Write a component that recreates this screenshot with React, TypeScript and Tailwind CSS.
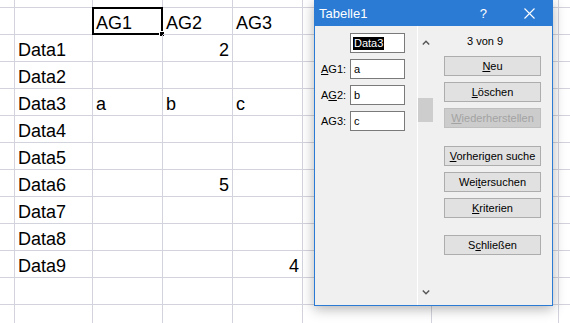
const colWidths = ["w-[15px]", "w-[78px]", "w-[70px]", "w-[70px]", "w-[70px]", "w-[129px]", "w-[127px]", "w-[40px]"];

type Cell = { text: string; right?: boolean };

const rows: Cell[][] = [
  [{ text: "" }, { text: "" }, { text: "AG1" }, { text: "AG2" }, { text: "AG3" }],
  [{ text: "" }, { text: "Data1" }, { text: "" }, { text: "2", right: true }],
  [{ text: "" }, { text: "Data2" }],
  [{ text: "" }, { text: "Data3" }, { text: "a" }, { text: "b" }, { text: "c" }],
  [{ text: "" }, { text: "Data4" }],
  [{ text: "" }, { text: "Data5" }],
  [{ text: "" }, { text: "Data6" }, { text: "" }, { text: "5", right: true }],
  [{ text: "" }, { text: "Data7" }],
  [{ text: "" }, { text: "Data8" }],
  [{ text: "" }, { text: "Data9" }, { text: "" }, { text: "" }, { text: "4", right: true }],
  [],
  [],
];

function Button({ children, disabled }: { children: React.ReactNode; disabled?: boolean }) {
  return (
    <div
      className={
        disabled
          ? "ml-[11px] w-[97px] h-[20px] flex items-center justify-center border border-[#bfbfbf] bg-[#cccccc] text-[#a3a3a3] text-[11px]"
          : "ml-[11px] w-[97px] h-[20px] flex items-center justify-center border border-[#adadad] bg-[#e1e1e1] text-black text-[11px]"
      }
    >
      {children}
    </div>
  );
}

function Field({ label, value }: { label?: React.ReactNode; value: React.ReactNode }) {
  return (
    <div className="flex items-center h-[20px]">
      <div className="w-[29px] text-[11px] text-black">{label}</div>
      <div className="w-[55px] h-[20px] bg-white border border-[#7a7a7a] flex items-center pl-[3px] text-[11px] text-black">
        {value}
      </div>
    </div>
  );
}

export default function App() {
  return (
    <div className="relative w-[570px] h-[323px] overflow-hidden bg-white font-['Liberation_Sans',Arial,sans-serif]">
      {/* sheet grid */}
      <div className="flex flex-col">
        <div className="flex h-[8px]">
          {colWidths.map((w, i) => (
            <div key={i} className={`${w} shrink-0 border-r border-b border-[#d3d3dd]`} />
          ))}
        </div>
        {rows.map((row, r) => (
          <div key={r} className="flex h-[27px]">
            {colWidths.map((w, c) => {
              const cell = row[c];
              const selected = r === 0 && c === 2;
              return (
                <div
                  key={c}
                  className={`${w} shrink-0 relative border-r border-b border-[#d3d3dd] flex items-end pb-[1px] text-[18px] leading-[20px] text-black ${
                    cell?.right ? "justify-end pr-[3px]" : "pl-[3px]"
                  }`}
                >
                  {cell?.text}
                  {selected && (
                    <div className="absolute -left-[1px] -top-[1px] w-[71px] h-[28px] border-2 border-black">
                      <div className="absolute -right-[4px] -bottom-[4px] w-[6px] h-[6px] bg-black border border-white" />
                    </div>
                  )}
                </div>
              );
            })}
          </div>
        ))}
      </div>

      {/* data form dialog */}
      <div className="absolute left-[314px] top-0 w-[239px] h-[306px] border border-[#2b7bd4] bg-[#f0f0f0] flex flex-col shadow-[0_3px_12px_rgba(0,0,0,0.3)]">
        <div className="h-[25px] bg-[#2b7bd4] flex items-center text-white text-[13px] pl-[4px]">
          <span>Tabelle1</span>
          <span className="ml-auto">?</span>
          <svg className="ml-[37px] mr-[17px]" width="11" height="11" viewBox="0 0 11 11">
            <path d="M0.5 0.5 L10.5 10.5 M10.5 0.5 L0.5 10.5" stroke="white" strokeWidth="1.1" />
          </svg>
        </div>
        <div className="flex flex-1">
          <div className="w-[102px] pl-[6px] pt-[7px] flex flex-col gap-[6px]">
            <Field
              value={
                <span className="ml-[-1px] bg-black text-white px-[1px] leading-[13px]">Data3</span>
              }
            />
            <Field
              label={
                <span>
                  <u>A</u>G1:
                </span>
              }
              value="a"
            />
            <Field
              label={
                <span>
                  A<u>G</u>2:
                </span>
              }
              value="b"
            />
            <Field label="AG3:" value="c" />
          </div>
          <div className="w-[16px] border-l border-white flex flex-col items-center">
            <svg className="mt-[14px]" width="8" height="5" viewBox="0 0 8 5">
              <path d="M0.8 4.4 L4 1.2 L7.2 4.4" stroke="#555" strokeWidth="1.4" fill="none" />
            </svg>
            <div className="mt-[53px] w-full h-[24px] bg-[#cdcdcd]" />
            <svg className="mt-auto mb-[10px]" width="8" height="5" viewBox="0 0 8 5">
              <path d="M0.8 0.6 L4 3.8 L7.2 0.6" stroke="#555" strokeWidth="1.4" fill="none" />
            </svg>
          </div>
          <div className="flex-1 flex flex-col pt-[9px]">
            <div className="pl-[34px] text-[11px] leading-[13px] text-black">3 von 9</div>
            <div className="mt-[8px] flex flex-col gap-[6px]">
              <Button>
                <span>
                  <u>N</u>eu
                </span>
              </Button>
              <Button>
                <span>
                  <u>L</u>öschen
                </span>
              </Button>
              <Button disabled>
                <span>
                  <u>W</u>iederherstellen
                </span>
              </Button>
            </div>
            <div className="mt-[18px] flex flex-col gap-[6px]">
              <Button>
                <span>
                  <u>V</u>orherigen suche
                </span>
              </Button>
              <Button>
                <span>
                  Wei<u>t</u>ersuchen
                </span>
              </Button>
              <Button>
                <span>
                  <u>K</u>riterien
                </span>
              </Button>
            </div>
            <div className="mt-[17px]">
              <Button>
                <span>
                  S<u>c</u>hließen
                </span>
              </Button>
            </div>
          </div>
        </div>
      </div>
    </div>
  );
}
